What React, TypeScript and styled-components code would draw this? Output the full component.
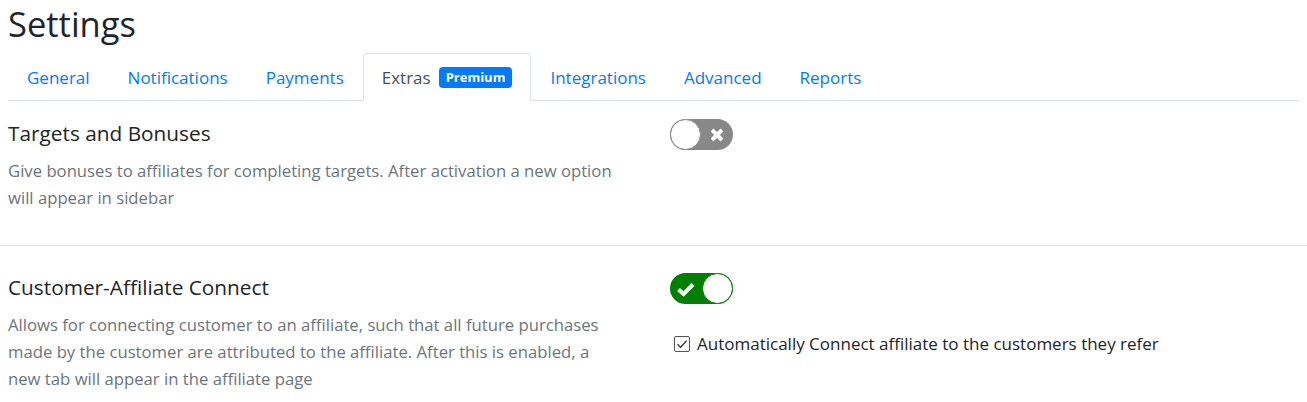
import React, { useState } from "react";
import styled, { createGlobalStyle } from "styled-components";

const GlobalStyle = createGlobalStyle`
    body {
        margin: 0;
        background: #fff;
        font-family: "Open Sans", "Noto Sans", sans-serif;
        color: #212529;
    }
`;

const tabs = [
    "General",
    "Notifications",
    "Payments",
    "Extras",
    "Integrations",
    "Advanced",
    "Reports",
];

export default function App() {
    const [targets, setTargets] = useState(false);
    const [connect, setConnect] = useState(true);
    const [autoConnect, setAutoConnect] = useState(true);

    return (
        <Page>
            <GlobalStyle />
            <Title>Settings</Title>
            <TabBar>
                {tabs.map((tab) => (
                    <Tab key={tab} active={tab === "Extras"}>
                        {tab}
                        {tab === "Extras" && <Badge>Premium</Badge>}
                    </Tab>
                ))}
            </TabBar>

            <Section top={18} bottom={34}>
                <Info>
                    <SectionTitle>Targets and Bonuses</SectionTitle>
                    <Description>
                        Give bonuses to affiliates for completing targets. After
                        activation a new option will appear in sidebar
                    </Description>
                </Info>
                <Controls>
                    <Toggle on={targets} onClick={() => setTargets(!targets)} />
                </Controls>
            </Section>

            <Divider />

            <Section top={27} bottom={20}>
                <Info>
                    <SectionTitle>Customer-Affiliate Connect</SectionTitle>
                    <Description>
                        Allows for connecting customer to an affiliate, such that
                        all future purchases made by the customer are attributed
                        to the affiliate. After this is enabled, a new tab will
                        appear in the affiliate page
                    </Description>
                </Info>
                <Controls>
                    <Toggle on={connect} onClick={() => setConnect(!connect)} />
                    <CheckRow onClick={() => setAutoConnect(!autoConnect)}>
                        <CheckBox>
                            {autoConnect && (
                                <svg width="12" height="12" viewBox="0 0 12 12">
                                    <path
                                        d="M1.5 6.2 L4.6 9.2 L10.6 2.8"
                                        fill="none"
                                        stroke="#333"
                                        strokeWidth="1.3"
                                    />
                                </svg>
                            )}
                        </CheckBox>
                        Automatically Connect affiliate to the customers they refer
                    </CheckRow>
                </Controls>
            </Section>
        </Page>
    );
}

function Toggle({ on, onClick }: { on: boolean; onClick: () => void }) {
    return (
        <Switch on={on} onClick={onClick}>
            {on ? (
                <svg width="20" height="16" viewBox="0 0 20 16">
                    <path
                        d="M2.5 8.5 L7.5 13 L17 3.5"
                        fill="none"
                        stroke="#fff"
                        strokeWidth="4"
                    />
                </svg>
            ) : null}
            <Knob on={on} />
            {!on ? (
                <svg width="16" height="16" viewBox="0 0 16 16">
                    <path
                        d="M3 3 L13 13 M13 3 L3 13"
                        fill="none"
                        stroke="#fff"
                        strokeWidth="4"
                    />
                </svg>
            ) : null}
        </Switch>
    );
}

const Page = styled.div`
    padding: 0 8px;
`;

const Title = styled.h2`
    margin: 0;
    padding-top: 4px;
    font-size: 34.5px;
    font-weight: 400;
    line-height: 40px;
`;

const TabBar = styled.div`
    display: flex;
    margin-top: 9px;
    border-bottom: 1px solid #dee2e6;
`;

const Tab = styled.div<{ active?: boolean }>`
    display: flex;
    align-items: center;
    gap: 8px;
    height: 46px;
    padding: 0 18px;
    margin-bottom: -1px;
    font-size: 17px;
    color: ${(p) => (p.active ? "#495057" : "#007bff")};
    background: ${(p) => (p.active ? "#fff" : "transparent")};
    border: 1px solid ${(p) => (p.active ? "#dee2e6" : "transparent")};
    border-bottom-color: ${(p) => (p.active ? "#fff" : "transparent")};
    border-radius: 4px 4px 0 0;
    cursor: pointer;
`;

const Badge = styled.span`
    display: inline-block;
    padding: 3px 7px;
    border-radius: 4px;
    background: #007bff;
    color: #fff;
    font-size: 13px;
    font-weight: 700;
    line-height: 15px;
`;

const Section = styled.div<{ top: number; bottom: number }>`
    display: grid;
    grid-template-columns: 662px 1fr;
    padding: ${(p) => `${p.top}px 0 ${p.bottom}px`};
`;

const Info = styled.div`
    max-width: 618px;
`;

const SectionTitle = styled.h5`
    margin: 0 0 10px;
    font-size: 20.8px;
    font-weight: 400;
    line-height: 28px;
`;

const Description = styled.p`
    margin: 0;
    font-size: 16.7px;
    line-height: 27px;
    color: #6c757d;
`;

const Controls = styled.div`
    display: flex;
    flex-direction: column;
    align-items: flex-start;
    gap: 28px;
`;

const Switch = styled.div<{ on: boolean }>`
    display: flex;
    align-items: center;
    justify-content: space-between;
    box-sizing: border-box;
    width: 63px;
    height: 31px;
    padding: ${(p) => (p.on ? "0 0 0 6px" : "0 8px 0 0")};
    border-radius: 16px;
    background: ${(p) => (p.on ? "#008000" : "#888")};
    cursor: pointer;
`;

const Knob = styled.span<{ on: boolean }>`
    box-sizing: border-box;
    width: 31px;
    height: 31px;
    border-radius: 50%;
    background: #fff;
    border: 1px solid ${(p) => (p.on ? "#008000" : "#888")};
`;

const Divider = styled.hr`
    margin: 0 -8px;
    border: 0;
    border-top: 1px solid #dee2e6;
`;

const CheckRow = styled.label`
    display: flex;
    align-items: center;
    gap: 7px;
    padding-left: 4px;
    font-size: 17px;
    line-height: 24px;
    color: #212529;
    cursor: pointer;
`;

const CheckBox = styled.span`
    display: flex;
    align-items: center;
    justify-content: center;
    box-sizing: border-box;
    width: 16px;
    height: 16px;
    border: 1px solid #555;
    border-radius: 2px;
    background: #fff;
`;
